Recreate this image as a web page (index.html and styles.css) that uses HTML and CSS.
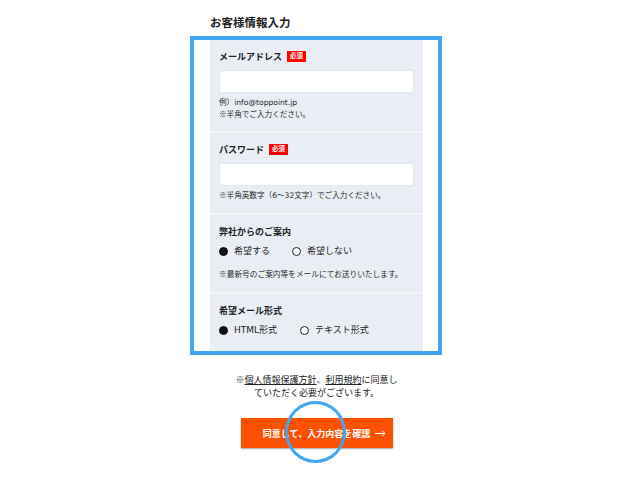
FILE: index.html
```html
<!DOCTYPE html>
<html lang="ja">
<head>
<meta charset="utf-8">
<title>お客様情報入力</title>
<link rel="stylesheet" href="styles.css">
</head>
<body>
<div class="page">
  <div class="column">
    <h1 class="title">お客様情報入力</h1>
    <div class="panel">
      <div class="field field-first">
        <div class="label">メールアドレス<span class="req">必須</span></div>
        <input class="input" type="text">
        <p class="hint">例）info@toppoint.jp<br><span class="jp">※</span>半角でご入力ください。</p>
      </div>
      <div class="field">
        <div class="label">パスワード<span class="req">必須</span></div>
        <input class="input" type="password">
        <p class="hint"><span class="jp">※</span>半角英数字（6〜32文字）でご入力ください。</p>
      </div>
      <div class="field">
        <div class="label">弊社からのご案内</div>
        <div class="radios">
          <span class="radio"><span class="dot dot-on"></span>希望する</span>
          <span class="radio"><span class="dot"></span>希望しない</span>
        </div>
        <p class="note"><span class="jp">※</span>最新号のご案内等をメールにてお送りいたします。</p>
      </div>
      <div class="field field-last">
        <div class="label">希望メール形式</div>
        <div class="radios">
          <span class="radio radio-wide"><span class="dot dot-on"></span>HTML形式</span>
          <span class="radio"><span class="dot"></span>テキスト形式</span>
        </div>
      </div>
    </div>
    <p class="consent"><span class="jp">※</span><span class="link">個人情報保護方針</span>、<span class="link">利用規約</span>に同意し<br>ていただく必要がございます。</p>
    <button class="submit" type="button">
      <span></span>
      <span class="submit-text">同意して、入力内容を確認</span>
      <span class="arrow"><svg width="11" height="7" viewBox="0 0 11 7"><path d="M0 3.5H10M7 0.8L10 3.5L7 6.2" fill="none" stroke="#fff" stroke-width="1"/></svg></span>
    </button>
  </div>
  <div class="frame"></div>
  <div class="ring"></div>
</div>
</body>
</html>
```

FILE: styles.css
```css
* { box-sizing: border-box; }
html, body { margin: 0; padding: 0; background: #fff; }
body {
  font-family: "DejaVu Sans", "Noto Sans CJK JP", sans-serif;
  color: #222;
}
.jp {
  font-family: "Noto Sans CJK JP", sans-serif;
  line-height: 0;
  color: inherit;
}
.page {
  position: relative;
  width: 630px;
  height: 480px;
  padding-top: 15px;
  overflow: hidden;
}
.column {
  width: 213px;
  margin-left: 210px;
}
.title {
  margin: 0 0 8px;
  font-size: 11.5px;
  line-height: 16px;
  font-weight: 700;
}
.panel {
  background: #e9edf4;
}
.field {
  padding: 11px 9px 11px;
  border-top: 2px solid #f3f5f9;
}
.field-first {
  border-top: 0;
  padding-top: 12px;
  padding-bottom: 10px;
}
.field-last {
  padding-bottom: 15px;
}
.label {
  display: flex;
  align-items: center;
  gap: 5px;
  height: 12px;
  font-size: 9px;
  line-height: 12px;
  font-weight: 700;
}
.req {
  display: inline-block;
  background: #f00;
  color: #fff;
  font-size: 6.5px;
  line-height: 11px;
  padding: 0 3px;
  font-weight: 700;
  margin-top: -2px;
}
.input {
  display: block;
  width: 100%;
  height: 23px;
  margin: 7px 0 0;
  padding: 0;
  background: #fff;
  border: 1px solid #e2e6ee;
  border-radius: 3px;
  outline: none;
}
.hint {
  margin: 4px 0 0;
  font-size: 7.6px;
  line-height: 12px;
  color: #2a2a2a;
}
.radios {
  display: flex;
  height: 12px;
  margin-top: 7px;
  font-size: 9px;
  line-height: 12px;
}
.radio {
  display: flex;
  align-items: center;
  margin-right: 22px;
}
.radio-wide { margin-right: 23px; }
.dot {
  flex: none;
  width: 9px;
  height: 9px;
  border-radius: 50%;
  border: 1px solid #222;
  background: #fff;
  margin-right: 6px;
}
.dot-on {
  background: #111;
  border-color: #111;
}
.note {
  margin: 12px 0 0;
  font-size: 7.7px;
  line-height: 12px;
  color: #2a2a2a;
}
.consent {
  margin: 23px 0 0;
  text-align: center;
  font-size: 9px;
  line-height: 13px;
}
.link { text-decoration: underline; }
.submit {
  display: grid;
  grid-template-columns: 1fr auto 1fr;
  align-items: center;
  width: 152px;
  height: 30px;
  margin: 18px auto 0;
  padding: 0;
  border: 0;
  background: #fd5000;
  color: #fff;
  font-family: inherit;
  font-size: 9px;
  font-weight: 700;
  box-shadow: 0 1px 1.5px rgba(0,0,0,0.35);
}
.submit-text { white-space: nowrap; }
.arrow {
  display: flex;
  justify-content: flex-end;
  padding-right: 7px;
}
.arrow svg { display: block; }
.frame {
  position: absolute;
  left: 190px;
  top: 36px;
  width: 252px;
  height: 319px;
  border: 4px solid #42a5f5;
}
.ring {
  position: absolute;
  left: 284.5px;
  top: 401px;
  width: 61px;
  height: 62px;
  border: 3.5px solid #42a5f5;
  border-radius: 50%;
}
```
